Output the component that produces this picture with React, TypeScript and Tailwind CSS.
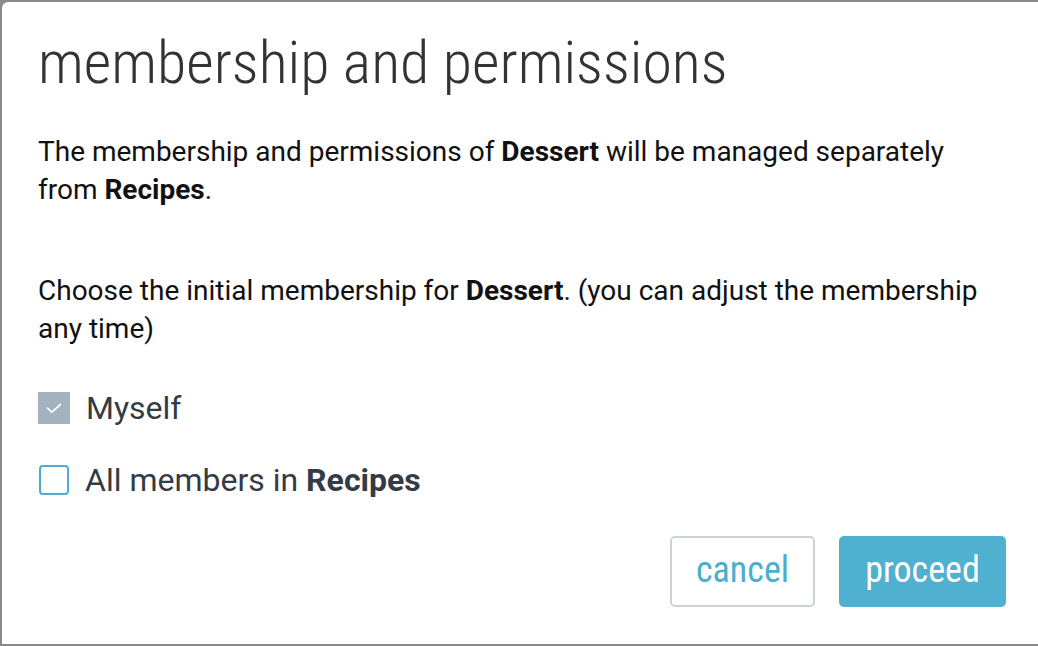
import React from "react";

export default function App() {
  return (
    <div className="w-[1038px] h-[646px] bg-[#8a8a8a] overflow-hidden" style={{ fontFamily: "Roboto, 'Noto Sans', sans-serif" }}>
      <div className="ml-[2px] mt-[2px] w-[1040px] h-[642px] bg-white rounded-tl-[6px] pl-[36px] pr-[32px] flex flex-col">
        <h1 className="mt-[26px] text-[60px] leading-[70px] font-light text-[#333333] [font-stretch:87.5%] whitespace-nowrap">
          membership and permissions
        </h1>
        <p className="mt-[35px] text-[28px] leading-[38px] text-[#111111] w-[940px]">
          The membership and permissions of <b className="font-bold">Dessert</b> will be managed separately from <b className="font-bold">Recipes</b>.
        </p>
        <p className="mt-[63px] text-[28px] leading-[38px] text-[#111111] w-[960px]">
          Choose the initial membership for <b className="font-bold">Dessert</b>. (you can adjust the membership any time)
        </p>
        <div className="mt-[44px] flex items-center h-[32px]">
          <div className="w-[32px] h-[32px] bg-[#a3b3bd] flex items-center justify-center">
            <svg width="16" height="11" viewBox="0 0 16 11" fill="none">
              <path d="M1.5 5.2 L5.8 9.2 L14.5 1.5" stroke="white" strokeWidth="1.7" strokeLinecap="round" strokeLinejoin="round" />
            </svg>
          </div>
          <span className="ml-[16px] text-[32px] text-[#333b45]">Myself</span>
        </div>
        <div className="mt-[40px] flex items-center h-[32px]">
          <div className="ml-[1px] w-[30px] h-[30px] border-2 border-[#4eaecf] rounded-[4px]" />
          <span className="ml-[16px] text-[32px] text-[#333b45]">
            All members in <b className="font-bold">Recipes</b>
          </span>
        </div>
        <div className="mt-[40px] flex justify-end w-[968px] gap-[24px]">
          <button className="w-[145px] h-[71px] pb-[4px] border-2 border-[#c9d3d9] rounded-[5px] text-[36px] [font-stretch:87.5%] text-[#4aaecd] bg-white">
            cancel
          </button>
          <button className="w-[167px] h-[71px] pb-[4px] rounded-[5px] text-[36px] [font-stretch:87.5%] text-white bg-[#4fb0cf]">
            proceed
          </button>
        </div>
      </div>
    </div>
  );
}
